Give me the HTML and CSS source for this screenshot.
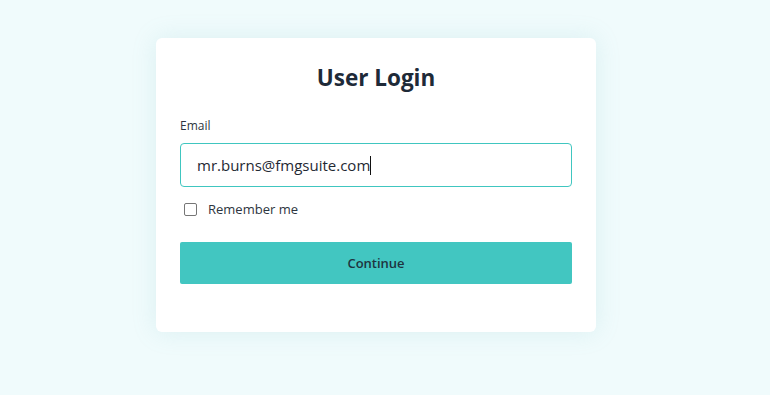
FILE: index.html
```html
<!DOCTYPE html>
<html lang="en">
<head>
<meta charset="utf-8">
<title>User Login</title>
<link rel="stylesheet" href="styles.css">
</head>
<body>
<main class="page">
  <section class="card">
    <h1 class="title">User Login</h1>
    <form class="form">
      <label class="label" for="email">Email</label>
      <div class="input" id="email"><span class="value">mr.burns@fmgsuite.com</span><span class="caret"></span></div>
      <label class="check">
        <span class="box"></span>
        <span class="check-text">Remember me</span>
      </label>
      <button type="button" class="btn">Continue</button>
    </form>
  </section>
</main>
</body>
</html>
```
FILE: styles.css
```css
* { box-sizing: border-box; }
html, body { margin: 0; padding: 0; }
body {
  background: #f0fbfc;
  font-family: "Open Sans", "Noto Sans", sans-serif;
  color: #1f2937;
  width: 770px;
  height: 395px;
  overflow: hidden;
}
.page {
  display: flex;
  justify-content: center;
  padding: 38px 18px 0 0;
}
.card {
  width: 440px;
  height: 294px;
  background: #ffffff;
  border-radius: 6px;
  box-shadow: 0 0 24px rgba(120, 190, 195, 0.18);
  padding: 24px 24px 0 24px;
}
.title {
  margin: 0;
  text-align: center;
  font-size: 22.5px;
  line-height: 32px;
  font-weight: 700;
  color: #1e2a38;
}
.form {
  display: flex;
  flex-direction: column;
}
.label {
  margin-top: 23px;
  font-size: 12px;
  line-height: 18px;
  color: #2d3540;
}
.input {
  margin-top: 8px;
  height: 44px;
  border: 1px solid #40c6c0;
  border-radius: 4px;
  display: flex;
  align-items: center;
  padding-left: 16px;
  font-size: 15px;
  color: #1f2933;
}
.caret {
  display: inline-block;
  width: 1px;
  height: 19px;
  background: #111;
}
.check {
  margin-top: 12px;
  height: 20px;
  display: flex;
  align-items: center;
  padding-left: 4px;
  font-size: 13px;
  color: #2d3540;
}
.box {
  width: 13px;
  height: 13px;
  border: 1px solid #767676;
  border-radius: 2px;
  background: #fff;
  margin-right: 11px;
}
.btn {
  margin-top: 23px;
  height: 42px;
  border: none;
  border-radius: 2px;
  background: #42c6c1;
  font-family: inherit;
  font-size: 13px;
  font-weight: 600;
  color: #1e3440;
  cursor: pointer;
}
```
